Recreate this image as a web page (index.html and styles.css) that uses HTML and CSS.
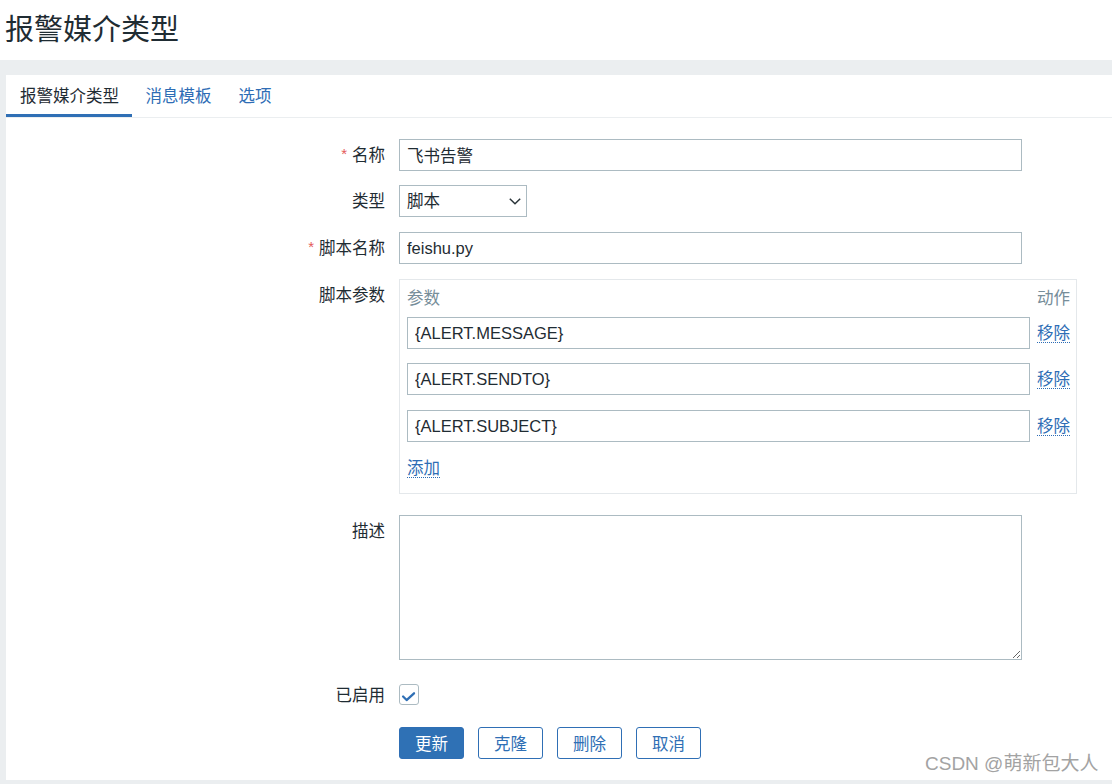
FILE: index.html
```html
<!DOCTYPE html>
<html lang="zh-CN">
<head>
<meta charset="utf-8">
<title>报警媒介类型</title>
<link rel="stylesheet" href="styles.css">
</head>
<body>
<header class="page-header">
  <h1 class="page-title">报警媒介类型</h1>
</header>
<main class="content">
  <section class="panel">
    <nav class="tabs">
      <a class="tab tab-active">报警媒介类型</a>
      <a class="tab">消息模板</a>
      <a class="tab">选项</a>
    </nav>
    <form class="form">
      <div class="row">
        <label class="label"><span class="req">*</span>名称</label>
        <input class="input input-wide" type="text" value="飞书告警">
      </div>
      <div class="row row-gap-14">
        <label class="label">类型</label>
        <div class="select">
          <span>脚本</span>
          <svg class="chev" width="12" height="7" viewBox="0 0 12 7"><path d="M0.8 0.8 L6 5.8 L11.2 0.8" fill="none" stroke="#2a3439" stroke-width="1.5"/></svg>
        </div>
      </div>
      <div class="row row-gap-15">
        <label class="label"><span class="req">*</span>脚本名称</label>
        <input class="input input-wide" type="text" value="feishu.py">
      </div>
      <div class="row row-gap-15">
        <label class="label">脚本参数</label>
        <div class="params">
          <div class="params-head">
            <span>参数</span>
            <span>动作</span>
          </div>
          <div class="param-row">
            <input class="input" type="text" value="{ALERT.MESSAGE}">
            <span class="action"><a class="link">移除</a></span>
          </div>
          <div class="param-row param-gap-14">
            <input class="input" type="text" value="{ALERT.SENDTO}">
            <span class="action"><a class="link">移除</a></span>
          </div>
          <div class="param-row param-gap-15">
            <input class="input" type="text" value="{ALERT.SUBJECT}">
            <span class="action"><a class="link">移除</a></span>
          </div>
          <div class="add-row"><a class="link">添加</a></div>
        </div>
      </div>
      <div class="row row-gap-21">
        <label class="label">描述</label>
        <textarea class="textarea"></textarea>
      </div>
      <div class="row row-check">
        <label class="label label-short">已启用</label>
        <span class="checkbox">
          <svg width="20" height="20" viewBox="0 0 20 20"><path d="M4.3 11.6 L8 15.3 L15.8 8.2" fill="none" stroke="#2f6fb5" stroke-width="2.4" stroke-linecap="round" stroke-linejoin="round"/></svg>
        </span>
      </div>
      <div class="row row-buttons">
        <span class="label"></span>
        <div class="buttons">
          <button type="button" class="btn btn-primary">更新</button>
          <button type="button" class="btn">克隆</button>
          <button type="button" class="btn">删除</button>
          <button type="button" class="btn">取消</button>
        </div>
      </div>
    </form>
  </section>
</main>
<div class="watermark">CSDN @萌新包大人</div>
</body>
</html>
```

FILE: styles.css
```css
html {
  background: #ebeef0;
}
body {
  margin: 0;
  font-family: "Liberation Sans", "Noto Sans CJK SC", sans-serif;
  font-size: 16.5px;
  color: #1f2c33;
  background: #ebeef0;
  min-height: 784px;
  position: relative;
}
.page-header {
  background: #ffffff;
  height: 60px;
}
.page-title {
  margin: 0;
  padding-left: 5px;
  font-size: 29px;
  font-weight: normal;
  line-height: 60px;
  height: 60px;
  color: #1f2c33;
}
.content {
  padding: 15px 0 0 6px;
}
.panel {
  background: #ffffff;
}
.tabs {
  display: flex;
  height: 42px;
  border-bottom: 1px solid #ebeef0;
}
.tab {
  display: block;
  padding: 0 13.5px;
  line-height: 42px;
  color: #2e6db5;
  box-sizing: border-box;
  height: 42px;
}
.tab-active {
  color: #1f2c33;
  padding: 0 13px 0 14px;
  box-shadow: inset 0 -3px 0 #2f6fb5;
}
.form {
  padding: 21px 0 21px 0;
}
.row {
  display: flex;
  align-items: flex-start;
  gap: 14px;
}
.row-gap-14 { margin-top: 14px; }
.row-gap-15 { margin-top: 15px; }
.row-gap-21 { margin-top: 21px; }
.row-check {
  margin-top: 25px;
  align-items: center;
  height: 20px;
}
.row-buttons { margin-top: 22px; }
.label {
  width: 379px;
  height: 32px;
  flex: none;
  text-align: right;
  line-height: 32px;
  color: #1f2c33;
}
.label-short {
  line-height: 20px;
  height: 20px;
}
.req {
  color: #e45959;
  margin-right: 5px;
  font-size: 15px;
  position: relative;
  top: -2px;
}
.input {
  box-sizing: border-box;
  height: 32px;
  border: 1px solid #acbbc2;
  border-radius: 0;
  padding: 0 7px;
  font-family: "Liberation Sans", "Noto Sans CJK SC", sans-serif;
  font-size: 16.5px;
  color: #1f2c33;
  background: #ffffff;
  outline: none;
  margin: 0;
}
.input-wide {
  width: 623px;
}
.select {
  box-sizing: border-box;
  width: 128px;
  height: 32px;
  border: 1px solid #acbbc2;
  padding: 0 5px 0 7px;
  display: flex;
  align-items: center;
  justify-content: space-between;
  line-height: 30px;
}
.chev {
  display: block;
  margin-top: 1px;
}
.params {
  box-sizing: border-box;
  width: 678px;
  height: 215px;
  border: 1px solid #e4e8eb;
  padding: 7px 6px 13px 7px;
}
.params-head {
  display: flex;
  justify-content: space-between;
  line-height: 22px;
  height: 22px;
  margin-bottom: 8px;
  color: #768d99;
}
.param-row {
  display: grid;
  grid-template-columns: 623px 1fr;
  column-gap: 6px;
  align-items: center;
  height: 32px;
}
.param-gap-14 { margin-top: 14px; }
.param-gap-15 { margin-top: 15px; }
.param-row .input {
  width: 623px;
}
.action {
  display: flex;
  justify-content: flex-end;
  align-items: center;
  height: 32px;
}
.link {
  display: inline-block;
  color: #2e6db5;
  line-height: 18px;
  height: 18px;
  border-bottom: 1px dotted #2e6db5;
  cursor: pointer;
}
.add-row {
  margin-top: 14px;
  height: 24px;
  display: flex;
  align-items: center;
}
.textarea {
  box-sizing: border-box;
  width: 623px;
  height: 145px;
  border: 1px solid #acbbc2;
  margin: 0;
  padding: 4px 7px;
  font-family: "Liberation Sans", "Noto Sans CJK SC", sans-serif;
  font-size: 16.5px;
  outline: none;
  display: block;
}
.checkbox {
  box-sizing: border-box;
  width: 20px;
  height: 21px;
  border: 1px solid #acbbc2;
  border-radius: 3px;
  display: flex;
  align-items: center;
  justify-content: center;
  margin-top: -1px;
}
.checkbox svg {
  display: block;
  margin-left: -1px;
}
.buttons {
  display: flex;
  gap: 14px;
}
.btn {
  box-sizing: border-box;
  width: 65px;
  height: 32px;
  border: 1px solid #2f6fb5;
  border-radius: 3px;
  background: #ffffff;
  color: #2f6fb5;
  font-family: "Liberation Sans", "Noto Sans CJK SC", sans-serif;
  font-size: 16.5px;
  padding: 0;
  margin: 0;
}
.btn-primary {
  background: #2f71b5;
  color: #ffffff;
}
.watermark {
  position: absolute;
  left: 925px;
  top: 751px;
  font-size: 19px;
  line-height: 26px;
  color: #a3a3a3;
  text-shadow: 0 0 1px rgba(255,255,255,0.9);
  white-space: nowrap;
}
```
